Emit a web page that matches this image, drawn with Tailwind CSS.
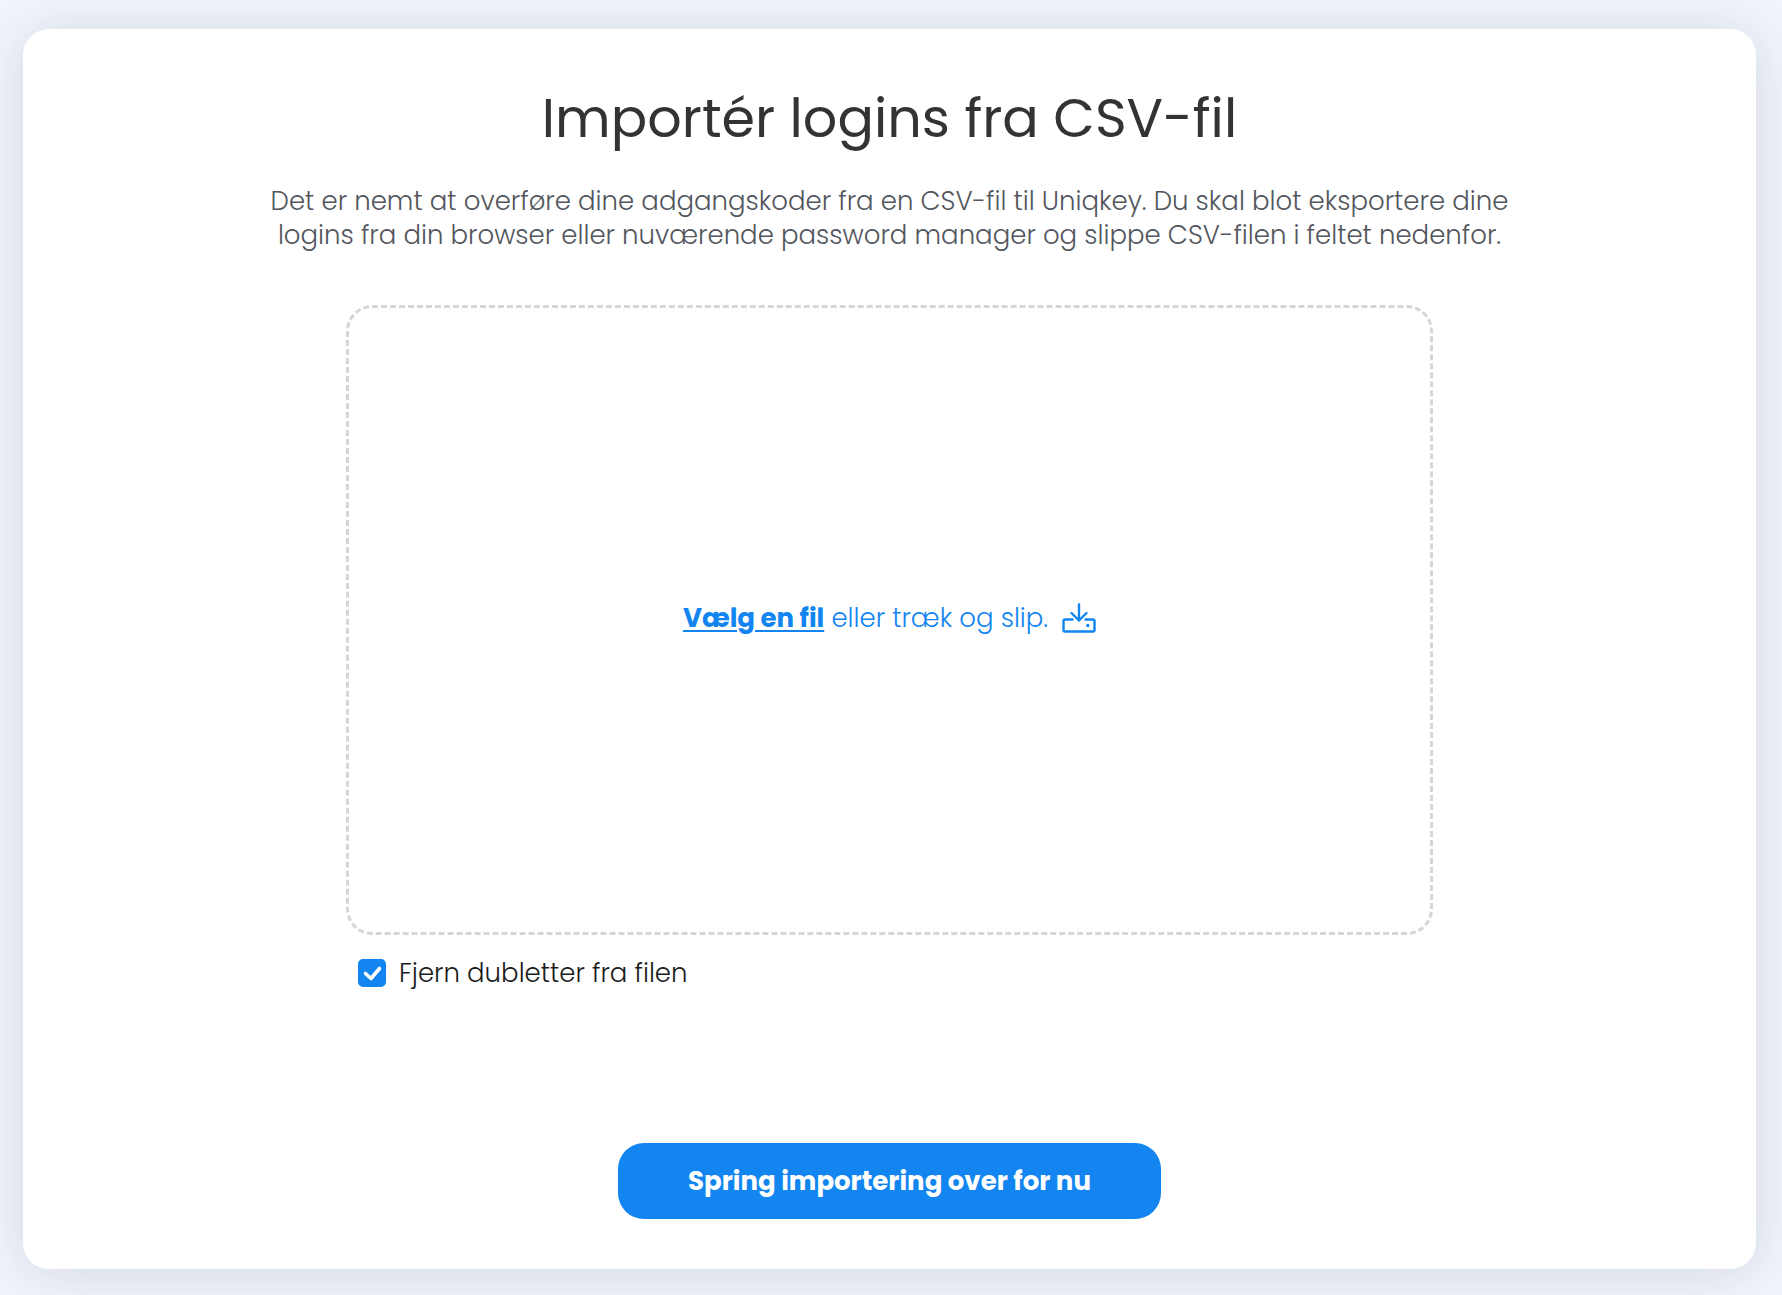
<!DOCTYPE html>
<html lang="da">
<head>
  <meta charset="UTF-8" />
  <meta name="viewport" content="width=device-width, initial-scale=1.0"/>
  <title>Importér logins fra CSV-fil</title>
  <script src="https://cdn.jsdelivr.net/npm/@tailwindcss/browser@4"></script>
</head>
<body class="flex min-h-screen bg-[#f0f4fc] pt-[29px] pr-[26px] pb-[26px] pl-[23px] font-['Poppins','Inter',sans-serif] font-light">
  <main class="flex flex-1 flex-col items-center rounded-[26px] bg-white px-6 pt-[55px] pb-[50px] shadow-[0_4px_52px_rgba(50,60,60,0.14)]">
    <h1 class="text-center text-[54px] leading-[68px] font-normal text-[#333333]">Importér logins fra CSV-fil</h1>
    <p class="mt-8 max-w-[1260px] text-center text-[26px] leading-[34px] text-[#53565d]">
      Det er nemt at overføre dine adgangskoder fra en CSV-fil til Uniqkey. Du skal blot eksportere dine<br class="hidden xl:inline" />
      logins fra din browser eller nuværende password manager og slippe CSV-filen i feltet nedenfor.
    </p>

    <div class="mt-[53px] w-full max-w-[1087px]">
      <div id="dropzone" class="flex min-h-[630px] items-center justify-center rounded-[26px] border-3 border-dashed border-[#d2d7db] pb-1 text-[26px] leading-[34px] text-[#1285f0]">
        <input type="file" id="csvFile" accept=".csv" class="sr-only" />
        <label for="csvFile" class="flex cursor-pointer items-center gap-[14px]">
          <span><span class="font-bold underline decoration-2 underline-offset-3">Vælg en fil</span> eller træk og slip.</span>
          <svg class="h-[30px] w-[34px]" viewBox="0 0 34 30" fill="none" stroke="#1285f0" stroke-width="2.4" stroke-linecap="round" stroke-linejoin="round" aria-hidden="true">
            <path d="M10.500 16.500H3a1.500 1.500 0 0 0-1.500 1.500v9a1.500 1.500 0 0 0 1.500 1.500h28a1.500 1.500 0 0 0 1.500-1.500v-9a1.500 1.500 0 0 0-1.500-1.500h-7.500"/>
            <path d="M17 1.500v16M9.500 10l7.500 7.500 7.500-7.500"/>
            <circle cx="25.800" cy="22.500" r="1.700" fill="#1285f0" stroke="none"/>
          </svg>
        </label>
      </div>

      <div class="mt-[21px] flex items-center gap-[13px] pl-3">
        <span class="grid size-7 place-items-center">
          <input type="checkbox" id="duplicates" checked class="peer col-start-1 row-start-1 size-7 appearance-none rounded-[5px] border-2 border-[#1285f0] checked:bg-[#1285f0]" />
          <svg class="pointer-events-none invisible col-start-1 row-start-1 size-7 peer-checked:visible" viewBox="0 0 28 28" fill="none" stroke="#ffffff" stroke-width="3.600" stroke-linecap="round" stroke-linejoin="round" aria-hidden="true">
            <path d="M7.500 14.500l5.500 5 8.500-10"/>
          </svg>
        </span>
        <label for="duplicates" class="text-[26px] leading-[34px] text-[#1c1c1c]">Fjern dubletter fra filen</label>
      </div>
    </div>

    <button type="button" class="mt-auto min-h-[76px] w-full max-w-[543px] rounded-[26px] bg-[#1285f0] px-6 text-[26px] leading-[34px] font-bold text-white">Spring importering over for nu</button>
  </main>

  <script>
    const dropzone = document.getElementById("dropzone");
    const csvFile = document.getElementById("csvFile");

    dropzone.addEventListener("dragover", function(e) {
      e.preventDefault();
    });

    dropzone.addEventListener("drop", function(e) {
      e.preventDefault();
      csvFile.files = e.dataTransfer.files;
    });
  </script>
</body>
</html>
